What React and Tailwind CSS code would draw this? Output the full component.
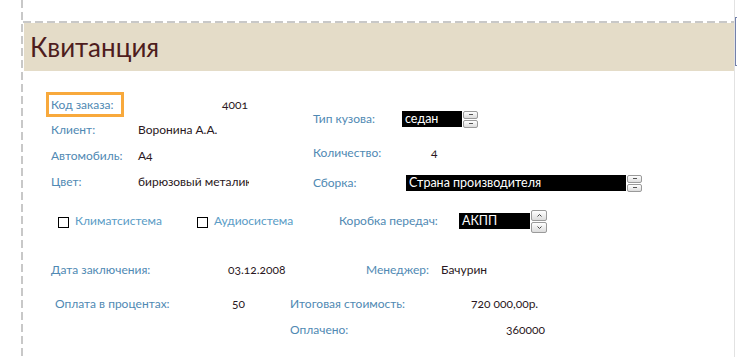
import React from 'react';

const labelCls = "text-[#4f89b3] whitespace-nowrap";
const valueCls = "text-[#2a1722] whitespace-nowrap oldstyle-nums";

const SpinBtn = ({ tall, mark }) => (
  <div
    className={
      tall
        ? "w-[16px] h-[11px] border border-[#9a9a9a] rounded-[2px] bg-gradient-to-b from-white to-[#dcdcdc] flex items-center justify-center"
        : "w-[15px] h-[8px] border border-[#9a9a9a] rounded-[2px] bg-gradient-to-b from-white to-[#dcdcdc] flex items-center justify-center"
    }
  >
    {mark === 'dash' && <div className="w-[4px] h-px bg-[#555]" />}
    {mark === 'up' && (
      <svg width="5" height="3" viewBox="0 0 5 3">
        <path d="M0.5 2.5 L2.5 0.5 L4.5 2.5" stroke="#444" fill="none" strokeWidth="1" />
      </svg>
    )}
    {mark === 'down' && (
      <svg width="5" height="3" viewBox="0 0 5 3">
        <path d="M0.5 0.5 L2.5 2.5 L4.5 0.5" stroke="#444" fill="none" strokeWidth="1" />
      </svg>
    )}
  </div>
);

const Spinner = ({ tall }) => (
  <div className="flex flex-col gap-px ml-px">
    <SpinBtn tall={tall} mark={tall ? 'up' : 'dash'} />
    <SpinBtn tall={tall} mark={tall ? 'down' : 'dash'} />
  </div>
);

const Combo = ({ text, width }) => (
  <div className="flex items-center">
    <div className={`${width} h-[16px] bg-black text-white text-[12.5px] leading-[16px] pl-[3px] overflow-hidden whitespace-nowrap`}>
      {text}
    </div>
  </div>
);

const CheckBox = () => (
  <div className="w-[11px] h-[11px] border border-black bg-white shrink-0 mt-[2px]" />
);

export default function App() {
  return (
    <div className="w-[737px] h-[357px] bg-white flex overflow-hidden font-['Lato',sans-serif] text-[12px]">
      {/* left gutter + dashed ruler */}
      <div className="w-[21px] shrink-0" />
      <div className="w-[2px] shrink-0 bg-[repeating-linear-gradient(to_bottom,#c8c8c8_0px,#c8c8c8_8px,transparent_8px,transparent_12px)]" />

      <div className="w-[711px] shrink-0 flex flex-col">
        <div className="h-[21px]" />
        <div className="h-[2px] bg-[repeating-linear-gradient(to_right,#c8c8c8_0px,#c8c8c8_8px,transparent_8px,transparent_12px)]" />

        {/* Header */}
        <div className="h-[48px] ml-px bg-[#e4dcc8] flex items-center pl-[6px]">
          <h1 className="text-[26px] text-[#4e1d1d] leading-none">Квитанция</h1>
        </div>

        {/* Main fields */}
        <div className="flex mt-[21px]">
          <div className="w-[290px] pl-[23px] flex flex-col">
            <div className="h-[25px] flex items-center">
              <div className="w-[78px] h-[25px] border-[3px] border-[#f8a93c] pl-[2px] flex items-center">
                <span className={labelCls}>Код заказа:</span>
              </div>
              <span className={`${valueCls} ml-[98px]`}>4001</span>
            </div>
            <div className="h-[26px] flex items-center pl-[5px]">
              <span className={`${labelCls} w-[87px]`}>Клиент:</span>
              <span className={valueCls}>Воронина А.А.</span>
            </div>
            <div className="h-[26px] flex items-center pl-[5px]">
              <span className={`${labelCls} w-[87px]`}>Автомобиль:</span>
              <span className={valueCls}>А4</span>
            </div>
            <div className="h-[26px] flex items-center pl-[5px]">
              <span className={`${labelCls} w-[87px]`}>Цвет:</span>
              <span className={`${valueCls} w-[111px] overflow-hidden`}>бирюзовый металик</span>
            </div>
          </div>

          <div className="flex flex-col">
            <div className="h-[18px] mt-[18px] flex items-center">
              <span className={`${labelCls} w-[89px]`}>Тип кузова:</span>
              <Combo text="седан" width="w-[60px]" />
              <Spinner />
            </div>
            <div className="h-[18px] mt-[16px] flex items-center">
              <span className={`${labelCls} w-[118px]`}>Количество:</span>
              <span className={valueCls}>4</span>
            </div>
            <div className="h-[18px] mt-[12px] flex items-center">
              <span className={`${labelCls} w-[93px]`}>Сборка:</span>
              <Combo text="Страна производителя" width="w-[220px]" />
              <Spinner />
            </div>
          </div>
        </div>

        {/* Options row */}
        <div className="h-[24px] mt-[14px] pl-[35px] flex items-center">
          <div className="w-[139px] flex items-center">
            <CheckBox />
            <span className="ml-[6px] text-[#5a9cc6] whitespace-nowrap">Климатсистема</span>
          </div>
          <div className="w-[142px] flex items-center">
            <CheckBox />
            <span className="ml-[6px] text-[#5a9cc6] whitespace-nowrap">Аудиосистема</span>
          </div>
          <span className={`${labelCls} w-[120px]`}>Коробка передач:</span>
          <Combo text="АКПП" width="w-[71px]" />
          <Spinner tall />
        </div>

        {/* Totals */}
        <div className="h-[20px] mt-[27px] pl-[28px] flex items-center">
          <span className={`${labelCls} w-[177px]`}>Дата заключения:</span>
          <span className={`${valueCls} w-[138px]`}>03.12.2008</span>
          <span className={`${labelCls} w-[75px]`}>Менеджер:</span>
          <span className={valueCls}>Бачурин</span>
        </div>
        <div className="h-[20px] mt-[14px] pl-[32px] flex items-center">
          <span className={`${labelCls} w-[177px]`}>Оплата в процентах:</span>
          <span className={`${valueCls} w-[58px]`}>50</span>
          <span className={`${labelCls} w-[181px]`}>Итоговая стоимость:</span>
          <span className={valueCls}>720 000,00р.</span>
        </div>
        <div className="h-[20px] mt-[6px] pl-[267px] flex items-center">
          <span className={`${labelCls} w-[216px]`}>Оплачено:</span>
          <span className={valueCls}>360000</span>
        </div>
      </div>

      {/* right edge */}
      <div className="w-px shrink-0 bg-[#e2e2e2]" />
      <div className="w-[2px] shrink-0 flex flex-col">
        <div className="h-[17px]" />
        <div className="h-[49px] border-l border-t border-b border-[#7381ab]" />
      </div>
    </div>
  );
}
